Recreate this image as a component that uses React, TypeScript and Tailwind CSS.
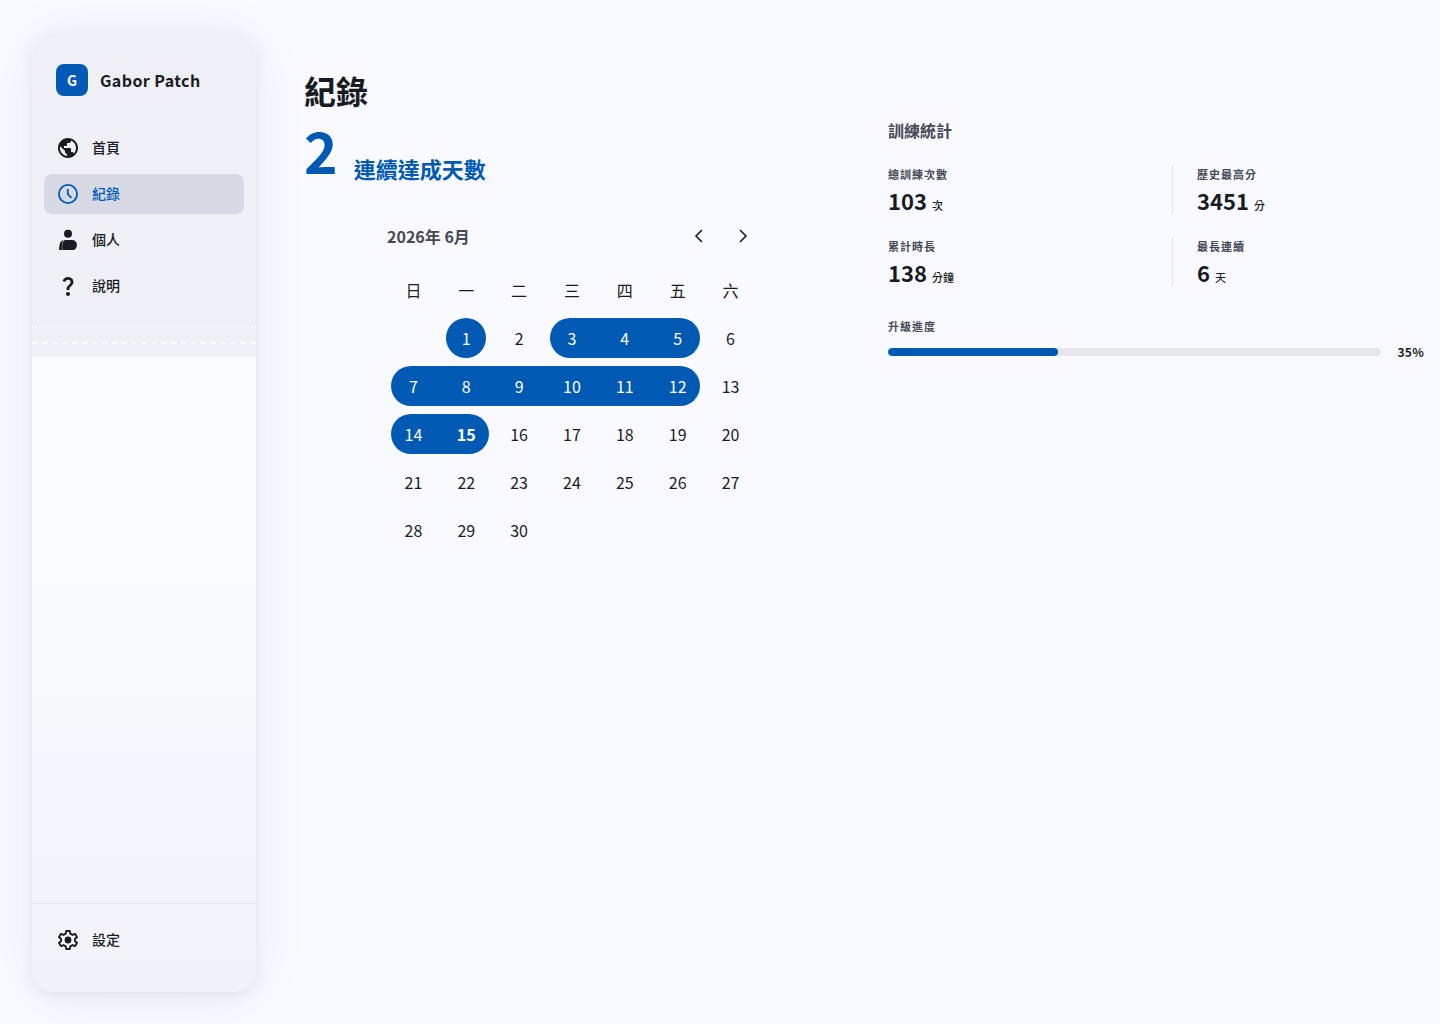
import React from "react";
import { MdPublic, MdQuestionMark } from "react-icons/md";

function ClockIcon() {
  return (
    <svg viewBox="0 0 24 24" className="size-6" fill="none" stroke="currentColor" strokeWidth="1.8" aria-hidden="true">
      <circle cx="12" cy="12" r="9.1" />
      <path d="M11.800 7v5.200l3.600 3.600" />
    </svg>
  );
}

function PersonIcon() {
  return (
    <svg viewBox="0 0 24 24" className="size-6" fill="currentColor" aria-hidden="true">
      <circle cx="12" cy="5.8" r="4" />
      <path d="M7.200 12C4.300 13 3.200 16 3.200 22h3c-.5-2.500-.6-7 1-10z" />
      <path d="M10 12h6c3.300 0 4.900 2.200 4.900 4.900S19.300 22 16.500 22H7.200c-1 0-1.100-2-1-4.500C6.300 14 7.500 12 10 12z" />
    </svg>
  );
}

function GearIcon() {
  return (
    <svg viewBox="0 0 24 24" className="size-6" aria-hidden="true">
      <path
        d="M10.200 3h3.600l.5 2.700 2.200 1.250 2.600-1 1.900 3.300-2.100 1.700v2.100l2.100 1.700-1.900 3.300-2.600-1-2.200 1.250-.5 2.700h-3.600l-.5-2.700-2.200-1.250-2.600 1L3 14.750l2.100-1.700v-2.100L3 9.250l1.900-3.300 2.600 1 2.200-1.250z"
        fill="none"
        stroke="currentColor"
        strokeWidth="1.9"
        strokeLinejoin="round"
      />
      <circle cx="12" cy="12" r="3.400" fill="currentColor" />
    </svg>
  );
}

type NavItemProps = { label: string; icon: React.ReactNode; active?: boolean };

function NavItem({ label, icon, active }: NavItemProps) {
  return (
    <a
      href="#"
      aria-current={active ? "page" : undefined}
      className={
        active
          ? "flex h-10 items-center gap-3 rounded-lg bg-[#d7d9e5] px-3 text-sm font-medium text-[#005ab4]"
          : "flex h-10 items-center gap-3 rounded-lg px-3 text-sm font-medium text-[#181c22]"
      }
    >
      {icon}
      <span className="pb-0.5">{label}</span>
    </a>
  );
}

function Sidebar() {
  return (
    <aside className="sticky top-8 m-8 mr-0 flex h-[calc(100vh-4rem)] w-56 shrink-0 flex-col overflow-hidden rounded-3xl bg-linear-to-b from-[#fafbff] from-55% to-[#f2f3f9] shadow-[0_4px_16px_rgba(0,0,0,0.07),0_4px_64px_rgba(0,0,0,0.05)]">
      <div className="bg-[#eff0f6] pb-[13px]">
        <div className="flex items-center gap-3 px-6 pt-8">
          <div className="flex size-8 items-center justify-center rounded-lg bg-[#005ab4] text-sm font-bold text-white">G</div>
          <span className="text-base font-bold tracking-wide text-[#181c22]">Gabor Patch</span>
        </div>
        <nav className="mt-8 flex flex-col gap-1.5 px-3 pb-5">
          <NavItem label="首頁" icon={<MdPublic className="size-6" />} />
          <NavItem label="紀錄" icon={<ClockIcon />} active />
          <NavItem label="個人" icon={<PersonIcon />} />
          <NavItem label="說明" icon={<MdQuestionMark className="size-6" />} />
        </nav>
        <div className="border-t-2 border-dotted border-[#f8f9fd] pb-3.5" />
        <div className="border-t-2 border-dashed border-[#f8f9fd]" />
      </div>
      <div className="mt-auto border-t border-[#e7e8ee] px-3 pt-4 pb-8">
        <NavItem label="設定" icon={<GearIcon />} />
      </div>
    </aside>
  );
}

const weekdays = ["日", "一", "二", "三", "四", "五", "六"];
const leadingBlanks = 1;
const daysInMonth = 30;
const today = 15;
const trained = new Set([1, 3, 4, 5, 7, 8, 9, 10, 11, 12, 14, 15]);

const weeks = Array.from({ length: 5 }, (_, w) =>
  Array.from({ length: 7 }, (_, d) => {
    const day = w * 7 + d + 1 - leadingBlanks;
    return day >= 1 && day <= daysInMonth ? day : null;
  }),
);

function dayClass(day: number, column: number) {
  if (!trained.has(day)) return "w-full";
  const first = column === 0 || !trained.has(day - 1);
  const last = column === 6 || !trained.has(day + 1);
  if (first && last) return "mx-auto w-10 rounded-full bg-[#005ab4] text-white";
  if (first) return "ml-1 rounded-l-full bg-[#005ab4] pr-1 text-white";
  if (last) return "mr-1 rounded-r-full bg-[#005ab4] pl-1 text-white";
  return "w-full bg-[#005ab4] text-white";
}

function Chevron({ d }: { d: string }) {
  return (
    <svg viewBox="0 0 24 24" className="size-6 text-[#181c22]" fill="none" stroke="currentColor" strokeWidth="1.6" aria-hidden="true">
      <path d={d} />
    </svg>
  );
}

function Calendar() {
  return (
    <section className="mx-auto mt-8 w-full max-w-[370px]">
      <div className="flex h-10 items-center justify-between">
        <h2 className="text-base font-bold text-[#454a55]">2026年 6月</h2>
        <div className="flex gap-4">
          <button type="button" aria-label="上個月" className="flex size-7 items-center justify-center">
            <Chevron d="M15 6l-6 6 6 6" />
          </button>
          <button type="button" aria-label="下個月" className="flex size-7 items-center justify-center">
            <Chevron d="M9 6l6 6-6 6" />
          </button>
        </div>
      </div>
      <table className="mt-2.5 w-full table-fixed text-center text-base text-[#181c22]">
        <thead>
          <tr className="h-12">
            {weekdays.map((d) => (
              <th key={d} scope="col" className="p-0 font-normal">{d}</th>
            ))}
          </tr>
        </thead>
        <tbody>
          {weeks.map((week, w) => (
            <tr key={w} className="h-12">
              {week.map((day, d) => (
                <td key={d} className="p-0">
                  {day && (
                    <div className={"flex h-10 items-center justify-center " + dayClass(day, d) + (day === today ? " font-bold" : "")}>
                      {day}
                    </div>
                  )}
                </td>
              ))}
            </tr>
          ))}
        </tbody>
      </table>
    </section>
  );
}

type StatProps = { label: string; value: string; unit: string; divided?: boolean };

function Stat({ label, value, unit, divided }: StatProps) {
  return (
    <div className={divided ? "h-12 border-l border-[#e4e5eb] pl-6" : "h-12"}>
      <dt className="text-[11px] leading-4 font-bold tracking-[1px] text-[#454a55]">{label}</dt>
      <dd className="mt-1 flex items-baseline gap-[5px] text-[#181c22]">
        <span className="text-[22px] leading-7 font-bold">{value}</span>
        <span className="text-[11px] leading-4 font-medium">{unit}</span>
      </dd>
    </div>
  );
}

function Stats() {
  return (
    <section className="pt-[52px]">
      <h2 className="text-base leading-6 font-bold text-[#454a55]">訓練統計</h2>
      <dl className="mt-6 grid grid-cols-2 gap-x-8 gap-y-6">
        <Stat label="總訓練次數" value="103" unit="次" />
        <Stat label="歷史最高分" value="3451" unit="分" divided />
        <Stat label="累計時長" value="138" unit="分鐘" />
        <Stat label="最長連續" value="6" unit="天" divided />
      </dl>
      <div className="mt-8">
        <div id="progress-label" className="text-[11px] leading-4 font-bold tracking-[1px] text-[#454a55]">升級進度</div>
        <div className="mt-2.5 flex items-center gap-4">
          <div role="progressbar" aria-labelledby="progress-label" aria-valuenow={35} className="h-2 flex-1 overflow-hidden rounded-full bg-[#e6e7ed]">
            <div className="h-full rounded-full bg-[#005ab4]" style={{ width: "34.5%" }} />
          </div>
          <span className="text-xs leading-4 font-bold tracking-wide text-[#181c22]">35%</span>
        </div>
      </div>
    </section>
  );
}

export default function App() {
  return (
    <div className="flex min-h-screen items-start bg-[#f9faff] font-['Noto_Sans_CJK_TC',sans-serif]">
      <Sidebar />
      <main className="grid min-w-0 flex-1 grid-cols-2 gap-12 pt-[66px] pr-4 pl-12">
        <div>
          <h1 className="text-[32px] leading-[48px] font-bold text-[#181c22]">紀錄</h1>
          <div className="mt-1.5 flex h-16 items-end gap-4 text-[#005ab4]">
            <span className="self-start text-[57px] leading-[58px] font-bold">2</span>
            <span className="text-[22px] leading-8 font-bold">連續達成天數</span>
          </div>
          <Calendar />
        </div>
        <Stats />
      </main>
    </div>
  );
}
